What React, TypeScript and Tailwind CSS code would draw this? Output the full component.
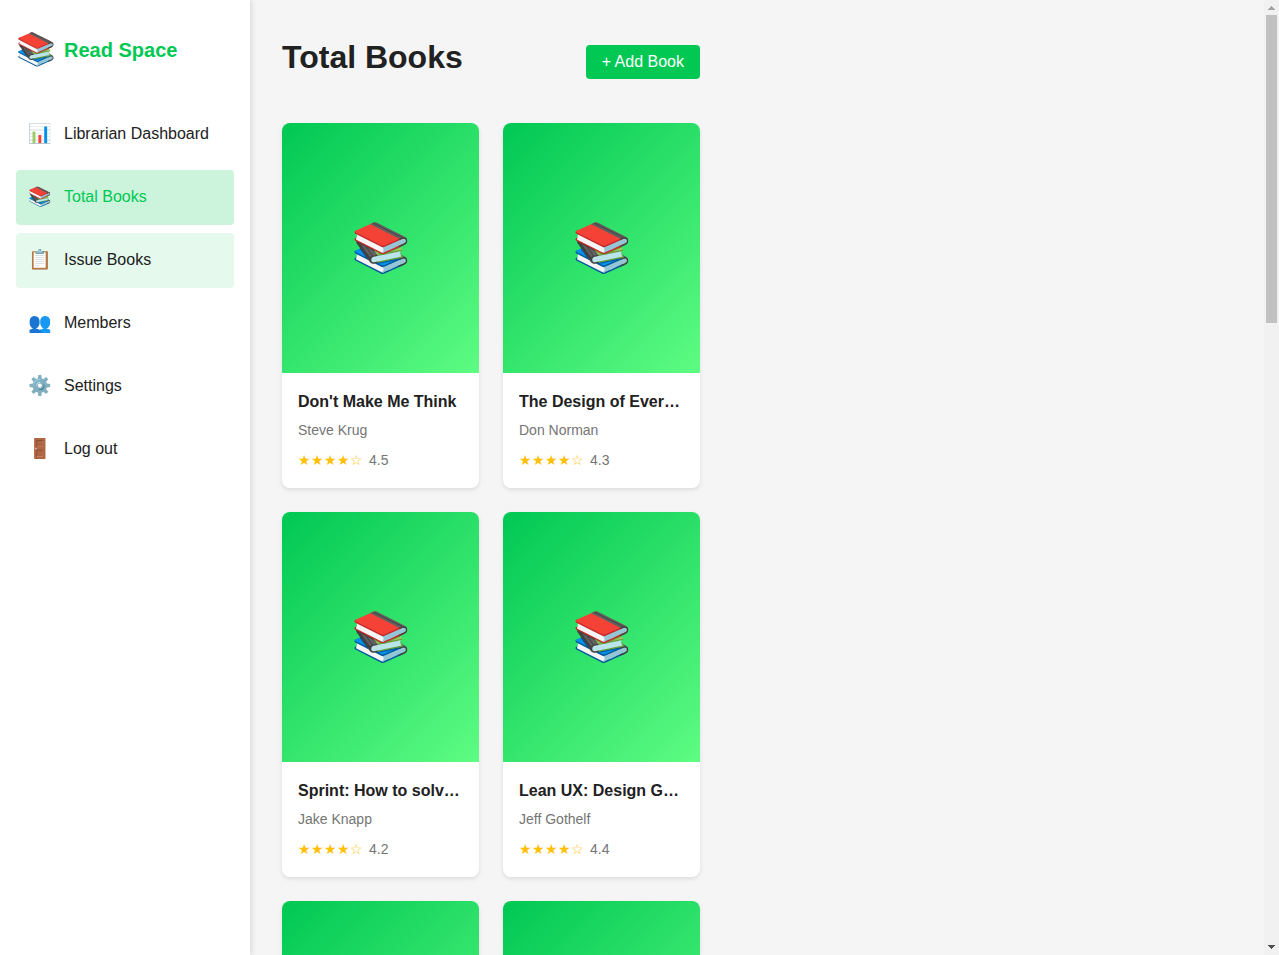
type NavItem = { icon: string; label: string; state?: 'active' | 'hover' };
type Book = { title: string; author: string; rating: string };

const navItems: NavItem[] = [
  { icon: '📊', label: 'Librarian Dashboard' },
  { icon: '📚', label: 'Total Books', state: 'active' },
  { icon: '📋', label: 'Issue Books', state: 'hover' },
  { icon: '👥', label: 'Members' },
  { icon: '⚙️', label: 'Settings' },
  { icon: '🚪', label: 'Log out' },
];

const books: Book[] = [
  { title: "Don't Make Me Think", author: 'Steve Krug', rating: '4.5' },
  { title: 'The Design of Everyday Things', author: 'Don Norman', rating: '4.3' },
  { title: 'Sprint: How to solve big problems', author: 'Jake Knapp', rating: '4.2' },
  { title: 'Lean UX: Design Great Products', author: 'Jeff Gothelf', rating: '4.4' },
  { title: "Don't Make Me Think", author: 'Steve Krug', rating: '4.5' },
  { title: 'The Design of Everyday Things', author: 'Don Norman', rating: '4.3' },
];

const stateClass = {
  active: 'bg-[#ccf4dd] text-[#00c853]',
  hover: 'bg-[#e5f9ed] text-[#212121]',
  idle: 'text-[#212121] hover:bg-[#e5f9ed]',
};

function Sidebar() {
  return (
    <aside className="z-10 w-[250px] shrink-0 bg-white px-4 pt-6 shadow-[2px_0_5px_rgba(0,0,0,0.1)]">
      <div className="flex h-[51px] items-center gap-2">
        <span className="w-10 text-[32px] leading-[51px]">📚</span>
        <span className="text-xl font-bold text-[#00c853]">Read Space</span>
      </div>
      <nav className="mt-8">
        <ul className="flex flex-col gap-2">
          {navItems.map((item) => (
            <li key={item.label}>
              <a
                href="#"
                className={`flex h-[55px] items-center gap-3 rounded px-3 pb-0.5 ${stateClass[item.state ?? 'idle']}`}
              >
                <span className="w-6 text-center text-[19px] leading-[31px]">{item.icon}</span>
                <span>{item.label}</span>
              </a>
            </li>
          ))}
        </ul>
      </nav>
    </aside>
  );
}

function BookCard({ book }: { book: Book }) {
  return (
    <article className="min-w-0 overflow-hidden rounded-lg bg-white shadow-[0_2px_4px_rgba(0,0,0,0.1)]">
      <div className="flex h-[250px] items-center justify-center bg-[linear-gradient(135deg,#00c853,#5efc82)] text-5xl">
        <span>📚</span>
      </div>
      <div className="p-4">
        <h2 className="mb-1 truncate text-base leading-[26px] font-bold">{book.title}</h2>
        <p className="mb-2 text-sm leading-[22px] text-[#757575]">{book.author}</p>
        <div className="flex gap-1.5 text-sm leading-[23px]">
          <span className="text-[#ffc107]">★★★★☆</span>
          <span className="text-[#757575]">{book.rating}</span>
        </div>
      </div>
    </article>
  );
}

function ScrollTrack() {
  return (
    <div aria-hidden="true" className="flex w-[15px] shrink-0 flex-col bg-[#f1f1f1]">
      <svg className="h-[15px] w-[15px] shrink-0" viewBox="0 0 15 15" shapeRendering="crispEdges" fill="#a3a3a3">
        <path d="M7 6h1v1h1v1h1v1h1v1H4V9h1V8h1V7h1z" />
      </svg>
      <div className="flex-1 px-0.5">
        <div className="h-1/3 bg-[#c1c1c1]" />
      </div>
      <svg className="h-[15px] w-[15px] shrink-0" viewBox="0 0 15 15" shapeRendering="crispEdges" fill="#505050">
        <path d="M4 5h7v1h-1v1H9v1H8v1H7V8H6V7H5V6H4z" />
      </svg>
    </div>
  );
}

export default function App() {
  return (
    <div className="flex h-screen bg-[#f5f5f5] font-['Liberation_Sans',Arial,sans-serif] text-base text-[#212121]">
      <Sidebar />
      <div className="flex-1 overflow-y-auto [scrollbar-width:none]">
        <main className="max-w-[482px] p-8">
          <header className="mb-8 flex items-center justify-between">
            <h1 className="mb-2 text-[32px] leading-[51px] font-bold">Total Books</h1>
            <button type="button" className="rounded bg-[#00c853] px-4 py-2 leading-[18px] text-white">
              + Add Book
            </button>
          </header>
          <section className="grid grid-cols-2 gap-6">
            {books.map((book, i) => (
              <BookCard key={i} book={book} />
            ))}
          </section>
        </main>
      </div>
      <ScrollTrack />
    </div>
  );
}
